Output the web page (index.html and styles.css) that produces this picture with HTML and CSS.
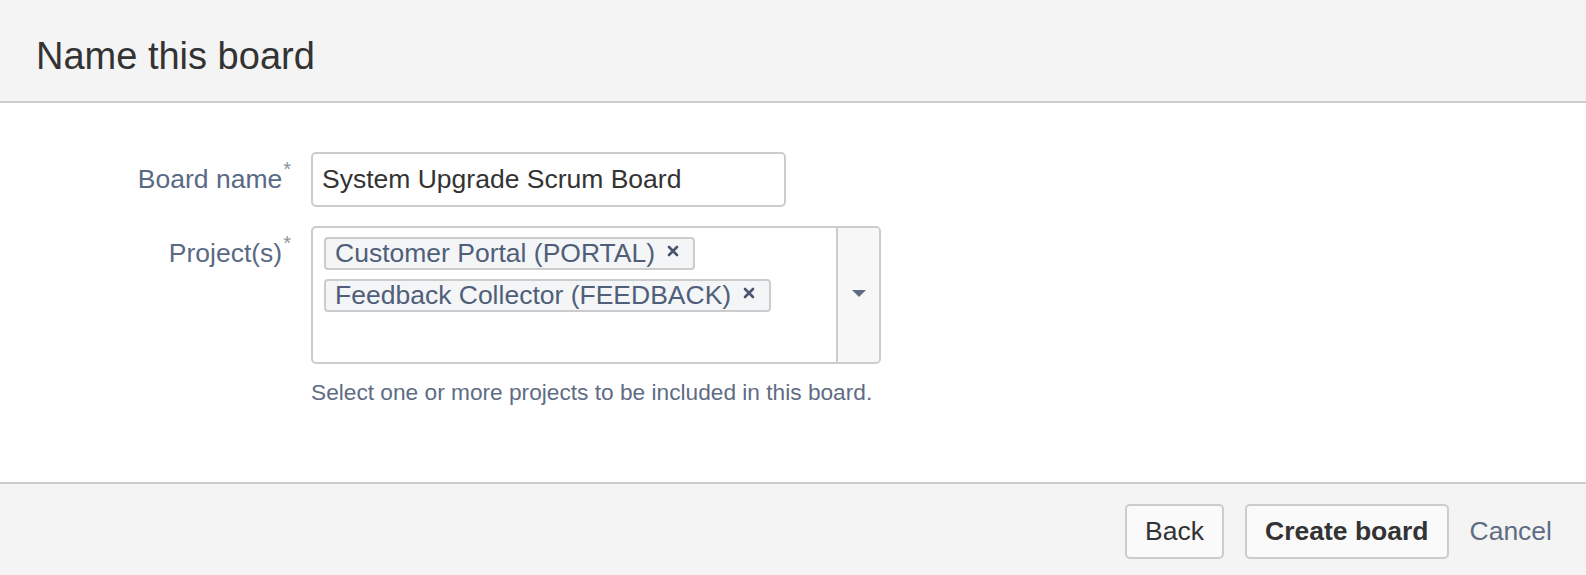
FILE: index.html
```html
<!DOCTYPE html>
<html lang="en">
<head>
<meta charset="utf-8">
<title>Name this board</title>
<link rel="stylesheet" href="styles.css">
</head>
<body>
<div class="dialog">
  <header class="dialog-header">
    <h1 class="dialog-title">Name this board</h1>
  </header>
  <main class="dialog-body">
    <div class="form">
      <div class="row">
        <label class="label">Board name<span class="req">*</span></label>
        <div class="field">
          <div class="text-input">System Upgrade Scrum Board</div>
        </div>
      </div>
      <div class="row row-projects">
        <label class="label label-projects">Project(s)<span class="req">*</span></label>
        <div class="field">
          <div class="multi-select">
            <div class="tags">
              <span class="tag">Customer Portal (PORTAL)<svg class="tag-x" width="12" height="12" viewBox="0 0 12 12"><path d="M2 2 L10 10 M10 2 L2 10" stroke="#4a5670" stroke-width="2.6" stroke-linecap="round"/></svg></span>
              <span class="tag">Feedback Collector (FEEDBACK)<svg class="tag-x" width="12" height="12" viewBox="0 0 12 12"><path d="M2 2 L10 10 M10 2 L2 10" stroke="#4a5670" stroke-width="2.6" stroke-linecap="round"/></svg></span>
            </div>
            <div class="drop">
              <svg class="drop-arrow" width="14" height="7" viewBox="0 0 14 7"><path d="M0 0 L14 0 L7 7 Z" fill="#5e6c84"/></svg>
            </div>
          </div>
          <div class="help">Select one or more projects to be included in this board.</div>
        </div>
      </div>
    </div>
  </main>
  <footer class="dialog-footer">
    <button class="btn">Back</button>
    <button class="btn btn-strong">Create board</button>
    <a class="cancel">Cancel</a>
  </footer>
</div>
</body>
</html>
```

FILE: styles.css
```css
html, body {
  margin: 0;
  padding: 0;
  background: #fff;
  font-family: "Liberation Sans", Arial, sans-serif;
}

.dialog {
  width: 1586px;
  height: 575px;
  display: flex;
  flex-direction: column;
}

.dialog-header {
  height: 103px;
  box-sizing: border-box;
  background: #f4f4f4;
  border-bottom: 2px solid #cccccc;
  padding: 35px 0 0 36px;
}

.dialog-title {
  margin: 0;
  font-weight: normal;
  font-size: 38px;
  line-height: 1.15;
  color: #333333;
}

.dialog-body {
  height: 379px;
  box-sizing: border-box;
  padding-top: 49px;
}

.form {
  display: flex;
  flex-direction: column;
  gap: 19px;
}

.row {
  display: grid;
  grid-template-columns: 291px 1fr;
  column-gap: 20px;
}

.label {
  text-align: right;
  font-size: 26.5px;
  color: #5a6a85;
  line-height: 55px;
  white-space: nowrap;
}

.label-projects {
  line-height: 32px;
  padding-top: 11px;
}

.req {
  font-size: 20px;
  vertical-align: 12px;
  color: #8993a4;
  margin-left: 1px;
  line-height: 0;
}

.text-input {
  width: 475px;
  height: 55px;
  box-sizing: border-box;
  border: 2px solid #cccccc;
  border-radius: 5px;
  padding: 0 9px;
  font-size: 26.5px;
  line-height: 51px;
  color: #333333;
}

.multi-select {
  width: 570px;
  height: 138px;
  box-sizing: border-box;
  border: 2px solid #cccccc;
  border-radius: 5px;
  display: flex;
}

.tags {
  flex: 1;
  display: flex;
  flex-direction: column;
  align-items: flex-start;
  gap: 9px;
  padding: 9px 0 0 11px;
}

.tag {
  display: inline-flex;
  align-items: center;
  height: 33px;
  box-sizing: border-box;
  border: 2px solid #cccccc;
  border-radius: 4px;
  background: #f4f5f7;
  color: #505f79;
  font-size: 26.5px;
  padding: 0 14px 0 9px;
  white-space: nowrap;
}

.tag-x {
  display: block;
  margin-left: 12px;
  position: relative;
  top: -3px;
}

.drop {
  width: 41px;
  border-left: 2px solid #cccccc;
  background: #f7f7f7;
  display: flex;
  align-items: center;
  justify-content: center;
  border-radius: 0 3px 3px 0;
  padding-bottom: 4px;
}

.drop-arrow {
  display: block;
}

.help {
  margin-top: 15px;
  font-size: 22.7px;
  color: #5e6c84;
}

.dialog-footer {
  flex: 1;
  background: #f4f4f4;
  border-top: 2px solid #cccccc;
  display: flex;
  align-items: center;
  justify-content: flex-end;
  padding: 3px 34px 0 0;
  gap: 21px;
}

.btn {
  font-family: "Liberation Sans", Arial, sans-serif;
  height: 55px;
  box-sizing: border-box;
  border: 2px solid #cccccc;
  border-radius: 5px;
  background: #fafafa;
  color: #333333;
  font-size: 26.5px;
  padding: 0 18px;
  margin: 0;
}

.btn-strong {
  font-weight: bold;
  padding: 0 18px;
}

.cancel {
  font-size: 26.5px;
  color: #5e6c84;
}
```
